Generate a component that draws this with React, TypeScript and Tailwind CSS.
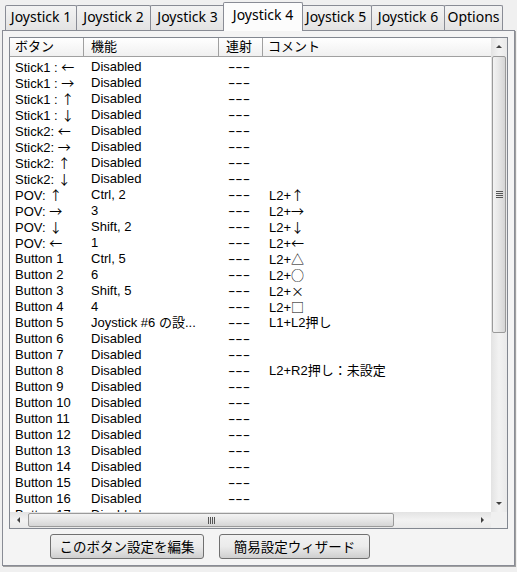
import React from "react";

const tabs = ["Joystick 1", "Joystick 2", "Joystick 3", "Joystick 4", "Joystick 5", "Joystick 6", "Options"];
const tabWidths = ["w-[72px]", "w-[75px]", "w-[75px]", "w-[80px]", "w-[72px]", "w-[74px]", "w-[59px]"];
const activeTab = 3;

type Row = [string, string, string];

const rows: Row[] = [
  ["Stick1 : ←", "Disabled", ""],
  ["Stick1 : →", "Disabled", ""],
  ["Stick1 : ↑", "Disabled", ""],
  ["Stick1 : ↓", "Disabled", ""],
  ["Stick2: ←", "Disabled", ""],
  ["Stick2: →", "Disabled", ""],
  ["Stick2: ↑", "Disabled", ""],
  ["Stick2: ↓", "Disabled", ""],
  ["POV: ↑", "Ctrl, 2", "L2+↑"],
  ["POV: →", "3", "L2+→"],
  ["POV: ↓", "Shift, 2", "L2+↓"],
  ["POV: ←", "1", "L2+←"],
  ["Button 1", "Ctrl, 5", "L2+△"],
  ["Button 2", "6", "L2+○"],
  ["Button 3", "Shift, 5", "L2+×"],
  ["Button 4", "4", "L2+□"],
  ["Button 5", "Joystick #6 の設...", "L1+L2押し"],
  ["Button 6", "Disabled", ""],
  ["Button 7", "Disabled", ""],
  ["Button 8", "Disabled", "L2+R2押し：未設定"],
  ["Button 9", "Disabled", ""],
  ["Button 10", "Disabled", ""],
  ["Button 11", "Disabled", ""],
  ["Button 12", "Disabled", ""],
  ["Button 13", "Disabled", ""],
  ["Button 14", "Disabled", ""],
  ["Button 15", "Disabled", ""],
  ["Button 16", "Disabled", ""],
  ["Button 17", "Disabled", ""],
];

const listFont = { fontFamily: '"Liberation Sans", "Noto Sans CJK JP", sans-serif' };

// symbols get the full-width CJK glyphs, like the original Japanese UI font
function Cell({ text }: { text: string }) {
  const parts = text.split(/([←→↑↓△○×□])/);
  return (
    <>
      {parts.map((p, i) =>
        /^[←→↑↓△○×□]$/.test(p) ? (
          <span key={i} className="text-[13px]" style={{ fontFamily: '"Noto Sans CJK JP", sans-serif' }}>
            {p}
          </span>
        ) : (
          <span key={i}>{p}</span>
        ),
      )}
    </>
  );
}

function Arrow({ dir }: { dir: "up" | "down" | "left" | "right" }) {
  const pts = {
    up: "1,5 4,2 7,5",
    down: "1,2 4,5 7,2",
    left: "5,1 2,4 5,7",
    right: "2,1 5,4 2,7",
  }[dir];
  return (
    <svg width="8" height="8" viewBox="0 0 8 8">
      <polygon points={pts} fill="#404040" />
    </svg>
  );
}

function VScroll() {
  return (
    <div className="flex h-full flex-col bg-gradient-to-r from-[#e3e3e3] via-[#f2f2f2] to-[#e9e9e9]">
      <div className="flex h-[17px] items-center justify-center">
        <Arrow dir="up" />
      </div>
      <div className="mx-[1px] mt-[1px] flex h-[277px] items-center justify-center rounded-[2px] border border-[#9a9a9a] bg-gradient-to-r from-[#f3f3f3] via-[#e6e6e6] to-[#d5d5d5]">
        <div className="flex flex-col gap-[1px]">
          <div className="h-[1px] w-[7px] bg-[#555]" />
          <div className="h-[1px] w-[7px] bg-[#555]" />
          <div className="h-[1px] w-[7px] bg-[#555]" />
          <div className="h-[1px] w-[7px] bg-[#555]" />
        </div>
      </div>
      <div className="flex-1" />
      <div className="flex h-[17px] items-center justify-center">
        <Arrow dir="down" />
      </div>
    </div>
  );
}

function HScroll() {
  return (
    <div className="flex h-full flex-row bg-gradient-to-b from-[#e3e3e3] via-[#f2f2f2] to-[#e9e9e9]">
      <div className="flex w-[17px] items-center justify-center">
        <Arrow dir="left" />
      </div>
      <div className="my-[1px] ml-[1px] flex w-[366px] items-center justify-center rounded-[2px] border border-[#9a9a9a] bg-gradient-to-b from-[#f3f3f3] via-[#e6e6e6] to-[#d5d5d5]">
        <div className="flex flex-row gap-[1px]">
          <div className="h-[7px] w-[1px] bg-[#555]" />
          <div className="h-[7px] w-[1px] bg-[#555]" />
          <div className="h-[7px] w-[1px] bg-[#555]" />
          <div className="h-[7px] w-[1px] bg-[#555]" />
        </div>
      </div>
      <div className="flex-1" />
      <div className="flex w-[17px] items-center justify-center">
        <Arrow dir="right" />
      </div>
    </div>
  );
}

function ListView() {
  return (
    <div
      className="mx-[6px] mt-[6px] grid h-[492px] grid-cols-[1fr_16px] grid-rows-[1fr_16px] border border-[#828790] bg-white"
      style={listFont}
    >
      <div className="overflow-hidden">
        <div className="flex h-[19px] items-stretch border-b border-[#a0a0a0] bg-gradient-to-b from-[#ffffff] to-[#f0f0f0] text-[13px] leading-[18px] text-black">
          <div className="w-[74px] border-r border-[#a0a0a0] pl-[5px]">ボタン</div>
          <div className="w-[135px] border-r border-[#a0a0a0] pl-[7px]">機能</div>
          <div className="w-[44px] border-r border-[#a0a0a0] pl-[7px]">連射</div>
          <div className="flex-1 pl-[5px]">コメント</div>
        </div>
        <div className="pt-[2px]">
          {rows.map(([button, func, comment]) => (
            <div key={button} className="flex h-[16px] text-[13px] leading-[16px] text-black">
              <div className="w-[74px] whitespace-nowrap pl-[5px]">
                <Cell text={button} />
              </div>
              <div className="w-[135px] whitespace-nowrap pl-[7px]">{func}</div>
              <div className="w-[44px] whitespace-nowrap pl-[9px]">
                <span className="inline-block origin-left scale-x-[1.7]">---</span>
              </div>
              <div className="flex-1 whitespace-nowrap pl-[6px]">
                <Cell text={comment} />
              </div>
            </div>
          ))}
        </div>
      </div>
      <VScroll />
      <HScroll />
      <div className="bg-[#f0f0f0]" />
    </div>
  );
}

function WinButton({ label, width }: { label: string; width: string }) {
  return (
    <button
      type="button"
      className={`${width} h-[25px] rounded-[3px] border border-[#707070] bg-gradient-to-b from-[#f2f2f2] via-[#ebebeb] to-[#cfcfcf] text-[13.5px] leading-[23px] text-black`}
      style={{ fontFamily: '"Noto Sans CJK JP", sans-serif' }}
    >
      {label}
    </button>
  );
}

export default function App() {
  return (
    <div className="h-[572px] w-[517px] overflow-hidden bg-[#f0f0f0]">
      <div className="flex h-[30px] items-end pl-[5px]" style={{ fontFamily: '"Noto Sans", sans-serif' }}>
        {tabs.map((t, i) => {
          const active = i === activeTab;
          return (
            <div
              key={t}
              className={
                active
                  ? `${tabWidths[i]} relative z-10 -mx-[2px] -mb-[1px] h-[29px] rounded-t-[2px] border border-b-0 border-[#898c95] bg-[#fcfcfc] text-center text-[14px] leading-[23px] text-black`
                  : `${tabWidths[i]} -ml-[1px] h-[25px] rounded-t-[2px] border border-b-0 border-[#898c95] bg-gradient-to-b from-[#f3f3f3] to-[#e3e3e3] text-center text-[14px] leading-[22px] text-black first:ml-0`
              }
            >
              {t}
            </div>
          );
        })}
      </div>
      <div className="mx-[2px] flex h-[536px] flex-col border border-[#898c95] bg-[#f4f4f4] shadow-[1px_1px_0_#a0a0a0]">
        <ListView />
        <div className="flex flex-1 items-center gap-[15px] pl-[47px] pb-[2px]">
          <WinButton label="このボタン設定を編集" width="w-[154px]" />
          <WinButton label="簡易設定ウィザード" width="w-[151px]" />
        </div>
      </div>
    </div>
  );
}
